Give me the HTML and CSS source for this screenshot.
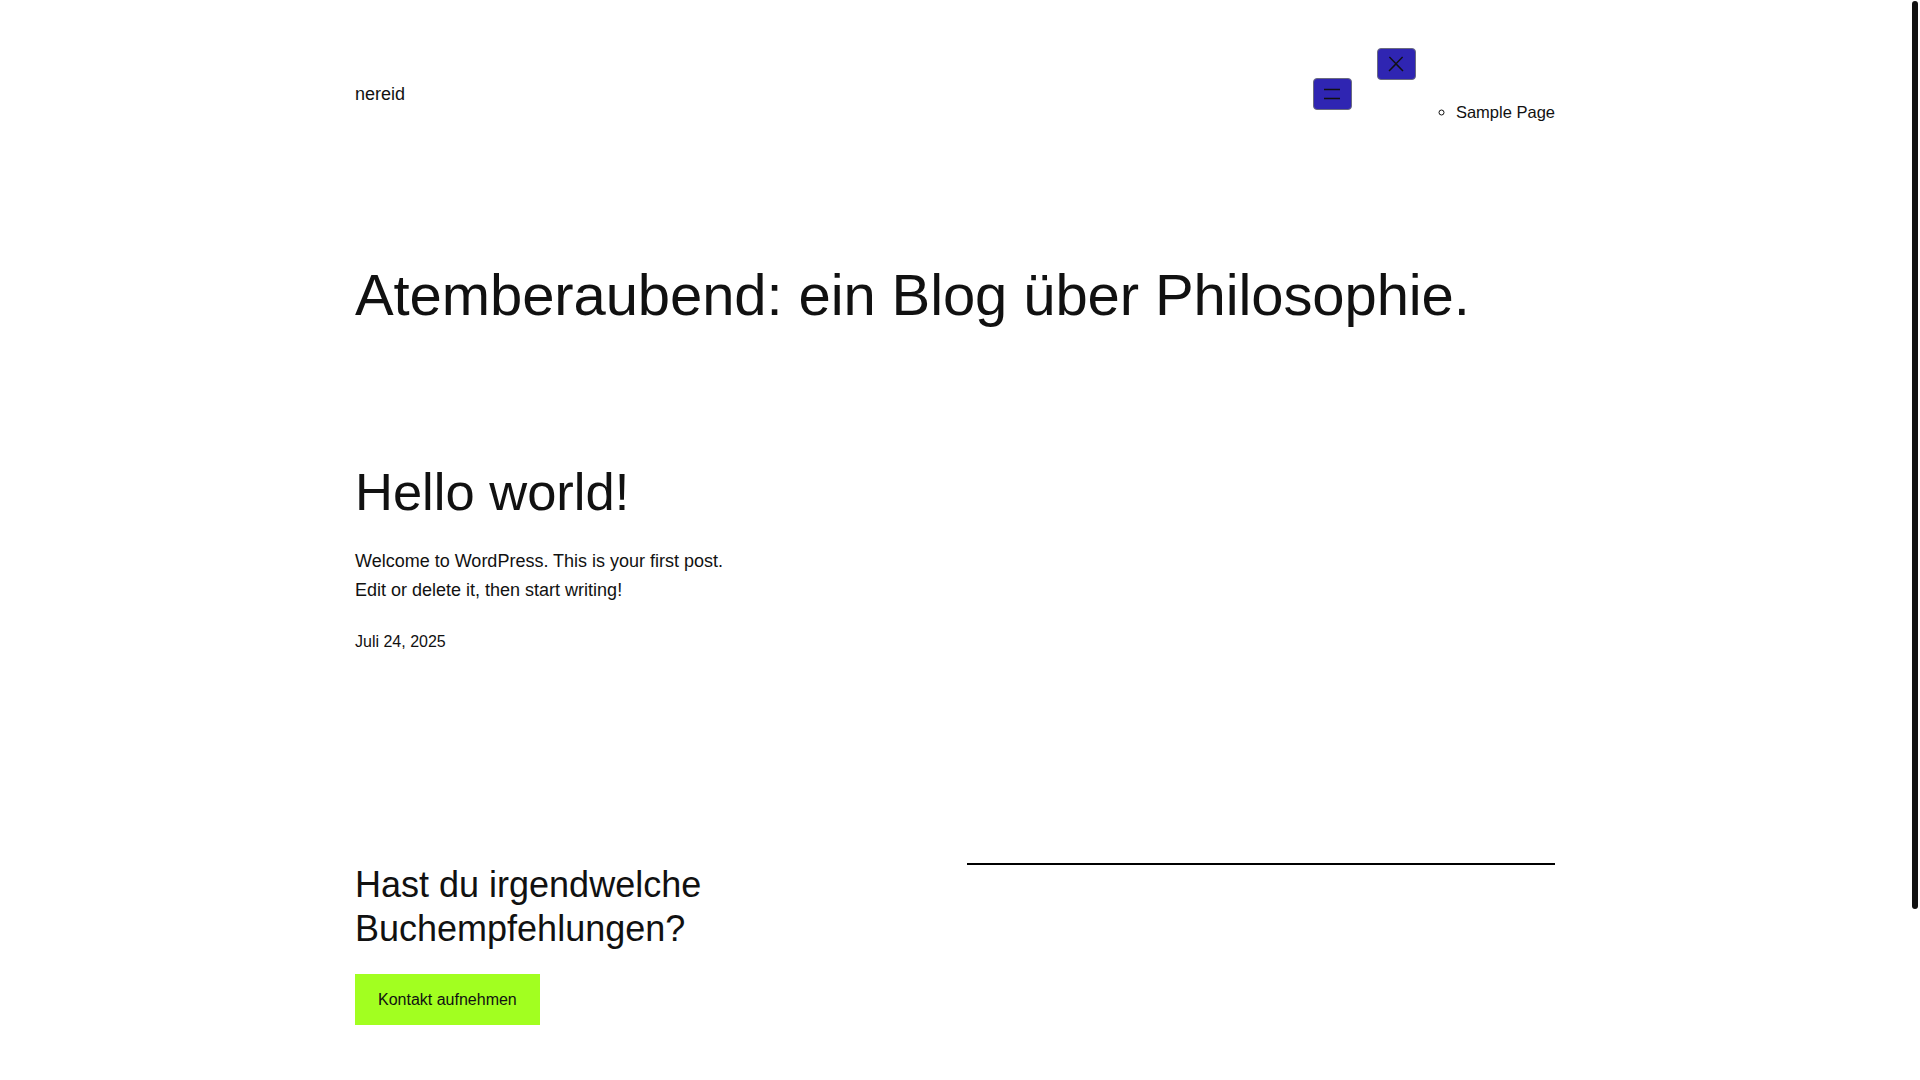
FILE: index.html
```html
<!DOCTYPE html>
<html lang="de">
<head>
  <meta charset="utf-8">
  <title>nereid</title>
  <link rel="stylesheet" href="styles.css">
</head>
<body>
  <div class="site">
    <header class="site-header">
      <p class="site-title">nereid</p>
      <nav class="main-nav">
        <button class="nav-open" aria-label="Menü öffnen">
          <svg viewBox="0 0 24 24" width="24" height="24"><path d="M4 6.8h16v1.5H4zm0 9h16v1.5H4z"/></svg>
        </button>
        <div class="nav-modal">
          <button class="nav-close" aria-label="Menü schließen">
            <svg viewBox="0 0 24 24" width="24" height="24"><path d="M13 11.8l6.1-6.3-1-1-6.1 6.2-6.1-6.2-1 1 6.1 6.3-6.5 6.7 1 1 6.5-6.6 6.5 6.6 1-1z"/></svg>
          </button>
          <ul class="nav-list">
            <li><a href="#">Sample Page</a></li>
          </ul>
        </div>
      </nav>
    </header>

    <main>
      <h1 class="tagline">Atemberaubend: ein Blog über Philosophie.</h1>

      <div class="posts">
        <article class="post">
          <h2 class="post-title">Hello world!</h2>
          <p class="post-excerpt">Welcome to WordPress. This is your first post. Edit or delete it, then start writing!</p>
          <div class="post-date">Juli 24, 2025</div>
        </article>
      </div>

      <!-- Call to action -->
      <section class="cta">
        <div class="cta-text">
          <h2>Hast du irgendwelche Buchempfehlungen?</h2>
          <a class="cta-button" href="#">Kontakt aufnehmen</a>
        </div>
        <div class="cta-side">
          <hr class="separator">
        </div>
      </section>
    </main>
  </div>

  <!-- scroll indicator at the right edge -->
  <div class="scroll-thumb" aria-hidden="true"></div>
</body>
</html>
```

FILE: styles.css
```css
body {
  margin: 0;
  padding-right: 10px;
  font-family: "Liberation Sans", Arial, sans-serif;
  color: #111;
  background-color: #fff;
}
a {
  color: inherit;
  text-decoration: none;
}
.site {
  max-width: 1200px;
  margin: 0 auto;
  padding-bottom: 257px;
}
.scroll-thumb {
  position: fixed;
  top: 1px;
  right: 2px;
  width: 6px;
  height: 908px;
  border-radius: 3px;
  background-color: #111;
}

/* Header */
.site-header {
  display: flex;
  justify-content: space-between;
  align-items: flex-start;
  padding-top: 48px;
}
.site-title {
  margin: 35px 0 0 0;
  font-size: 18px;
  line-height: 22px;
}
.main-nav {
  display: flex;
  align-items: flex-start;
  gap: 25px;
}
.nav-open,
.nav-close {
  display: flex;
  align-items: center;
  justify-content: center;
  width: 39px;
  height: 32px;
  padding: 0;
  background-color: #2f25b2;
  border: 1px solid #6b6b80;
  border-radius: 4px;
  cursor: pointer;
}
.nav-open svg,
.nav-close svg {
  fill: #111;
}
.nav-open {
  margin-top: 30px;
}
.nav-list {
  margin: 21px 0 0 0;
  padding-left: 79px;
  list-style: circle;
  font-size: 16.5px;
  line-height: 22px;
}

/* Tagline */
.tagline {
  margin: 137px 0 0 0;
  font-size: 58px;
  line-height: 70px;
  font-weight: normal;
  letter-spacing: -0.1px;
}

/* Posts */
.posts {
  display: grid;
  grid-template-columns: repeat(3, 1fr);
  gap: 24px;
  margin-top: 131px;
}
.post-title {
  margin: 0;
  font-size: 52.5px;
  line-height: 62px;
  font-weight: normal;
}
.post-excerpt {
  margin: 24px 0 0 0;
  font-size: 18px;
  line-height: 29px;
}
.post-date {
  margin-top: 24px;
  font-size: 16px;
  line-height: 26px;
}

/* Call to action */
.cta {
  display: grid;
  grid-template-columns: 1fr 1fr;
  gap: 24px;
  margin-top: 208px;
}
.cta-text h2 {
  margin: 0;
  font-size: 36px;
  line-height: 44px;
  font-weight: normal;
}
.cta-button {
  display: inline-block;
  margin-top: 23px;
  padding: 16px 23px;
  background-color: #a2ff20;
  font-size: 16px;
  line-height: 19px;
}
.separator {
  margin: 0;
  border: none;
  border-top: 2px solid #000;
}
```
